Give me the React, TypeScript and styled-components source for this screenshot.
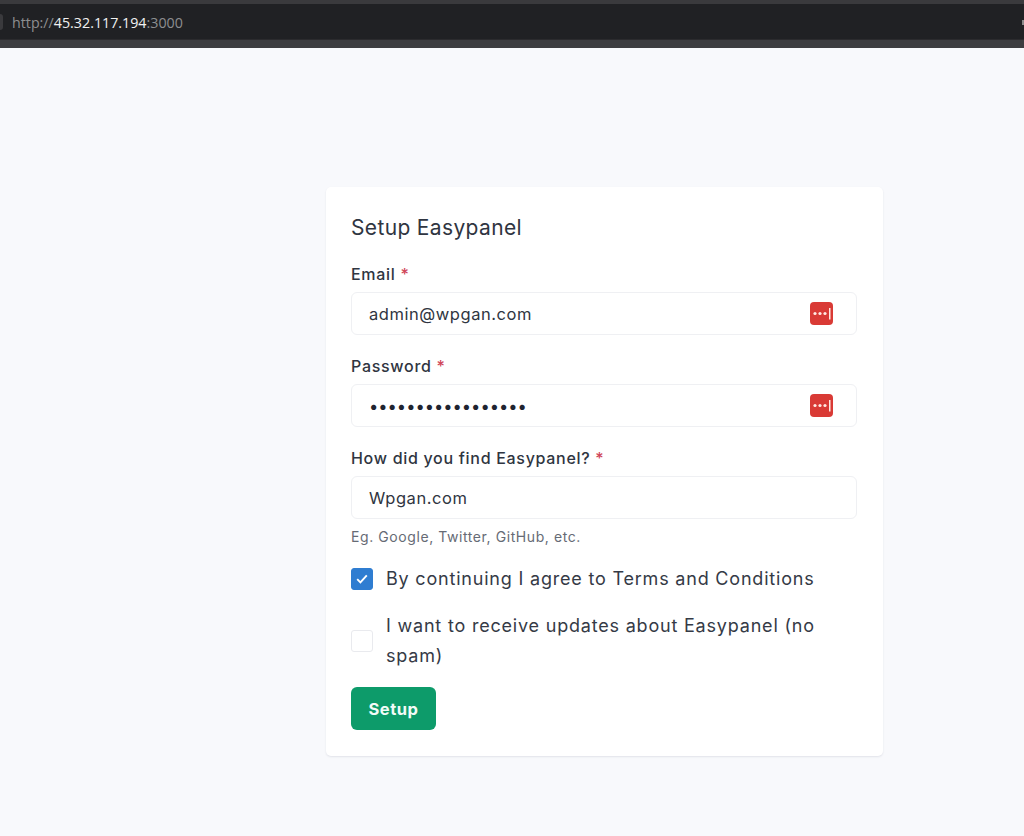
import React from 'react';
import styled, { createGlobalStyle } from 'styled-components';

const GlobalStyle = createGlobalStyle`
  html, body {
    margin: 0;
    padding: 0;
    background: #f8f9fc;
  }
  * {
    box-sizing: border-box;
  }
`;

const Page = styled.div`
  width: 1024px;
  height: 836px;
  overflow: hidden;
  font-family: Inter, 'Liberation Sans', sans-serif;
  color: #2e3440;
`;

const BrowserBar = styled.div`
  height: 48px;
  background: #202124;
  border-top: 4px solid #3a3a3d;
  border-bottom: 8px solid #3d3d40;
  display: flex;
  align-items: center;
  justify-content: space-between;
  box-shadow: inset 0 -1px 0 #2b2b2e;
`;

const UrlGroup = styled.div`
  display: flex;
  align-items: center;
  gap: 9px;
`;

const BackStub = styled.span`
  display: block;
  width: 3px;
  height: 16px;
  border-radius: 0 4px 4px 0;
  background: #3a3a3d;
`;

const Url = styled.span`
  font-family: 'Open Sans', 'Liberation Sans', sans-serif;
  font-size: 14.25px;
  color: #8d8e90;
`;

const Host = styled.span`
  color: #f1f1f1;
`;

const EdgeMark = styled.span`
  display: block;
  width: 2px;
  height: 5px;
  background: #8a8a8a;
`;

const Main = styled.main`
  display: flex;
  justify-content: flex-start;
  padding: 139px 0 0 326px;
`;

const Card = styled.form`
  width: 557px;
  height: 569px;
  background: #ffffff;
  border-radius: 5px;
  box-shadow: 0 1px 2px rgba(30, 40, 70, 0.1);
  padding: 26px 26px 26px 25px;
  display: flex;
  flex-direction: column;
`;

const Title = styled.h1`
  margin: 0;
  font-size: 21px;
  line-height: 30px;
  font-weight: 400;
  letter-spacing: 0.35px;
  color: #2f3541;
`;

const Field = styled.div<{ $first?: boolean }>`
  margin-top: ${(p) => (p.$first ? '18px' : '18px')};
`;

const Label = styled.label`
  display: block;
  font-size: 16px;
  line-height: 26px;
  font-weight: 500;
  letter-spacing: 0.7px;
  color: #2f3541;
  margin-bottom: 5px;
`;

const Required = styled.span`
  color: #cf4458;
`;

const InputBox = styled.div`
  height: 43px;
  border: 1px solid #eff0f3;
  border-radius: 6px;
  background: #fff;
  display: flex;
  align-items: center;
  justify-content: space-between;
  padding: 0 23px 0 17px;
  font-size: 16.5px;
  letter-spacing: 0.55px;
  color: #2f3541;
`;

const Dots = styled.span`
  font-size: 16.5px;
  letter-spacing: 0;
  color: #1f2430;
`;

const Hint = styled.p`
  margin: 8px 0 0;
  font-size: 14px;
  line-height: 20px;
  letter-spacing: 0.58px;
  color: #666b75;
`;

const CheckRow = styled.div`
  display: flex;
  align-items: center;
  gap: 13px;
  margin-top: 17px;
  font-size: 18px;
  line-height: 30px;
  letter-spacing: 0.8px;
  color: #353a46;
`;

const CheckBox = styled.span<{ $checked?: boolean }>`
  flex: none;
  width: 22px;
  height: 22px;
  border-radius: 3px;
  display: flex;
  align-items: center;
  justify-content: center;
  background: ${(p) => (p.$checked ? '#2f7dd1' : '#ffffff')};
  border: 1px solid ${(p) => (p.$checked ? '#2f7dd1' : '#e9eaee')};
`;

const SubmitButton = styled.button`
  align-self: flex-start;
  margin-top: 16px;
  width: 85px;
  height: 44px;
  border: none;
  border-radius: 6px;
  background: #0d9b6a;
  color: #f2fbf7;
  font-family: inherit;
  font-size: 16.5px;
  font-weight: 700;
  letter-spacing: 0.5px;
`;

const PasswordIcon = () => (
  <svg width="23" height="23" viewBox="0 0 23 23" aria-hidden="true">
    <rect width="23" height="23" rx="4" fill="#d93a35" />
    <circle cx="5" cy="11.5" r="1.6" fill="#ffe9e2" />
    <circle cx="10" cy="11.5" r="1.6" fill="#ffe9e2" />
    <circle cx="15" cy="11.5" r="1.6" fill="#ffe9e2" />
    <rect x="19" y="6" width="1.5" height="11.5" fill="#ffe9e2" />
  </svg>
);

const CheckMark = () => (
  <svg width="12" height="10" viewBox="0 0 12 10" aria-hidden="true">
    <path d="M1.2 5.2 4.4 8.4 10.8 1.4" fill="none" stroke="#fff" strokeWidth="1.9" />
  </svg>
);

export default function App() {
  return (
    <Page>
      <GlobalStyle />
      <BrowserBar>
        <UrlGroup>
          <BackStub />
          <Url>
            http://<Host>45.32.117.194</Host>:3000
          </Url>
        </UrlGroup>
        <EdgeMark />
      </BrowserBar>
      <Main>
        <Card>
          <Title>Setup Easypanel</Title>
          <Field $first>
            <Label>
              Email <Required>*</Required>
            </Label>
            <InputBox>
              admin@wpgan.com
              <PasswordIcon />
            </InputBox>
          </Field>
          <Field>
            <Label>
              Password <Required>*</Required>
            </Label>
            <InputBox>
              <Dots>•••••••••••••••••</Dots>
              <PasswordIcon />
            </InputBox>
          </Field>
          <Field>
            <Label>
              How did you find Easypanel? <Required>*</Required>
            </Label>
            <InputBox>Wpgan.com</InputBox>
            <Hint>Eg. Google, Twitter, GitHub, etc.</Hint>
          </Field>
          <CheckRow>
            <CheckBox $checked>
              <CheckMark />
            </CheckBox>
            By continuing I agree to Terms and Conditions
          </CheckRow>
          <CheckRow>
            <CheckBox />
            I want to receive updates about Easypanel (no spam)
          </CheckRow>
          <SubmitButton type="button">Setup</SubmitButton>
        </Card>
      </Main>
    </Page>
  );
}
